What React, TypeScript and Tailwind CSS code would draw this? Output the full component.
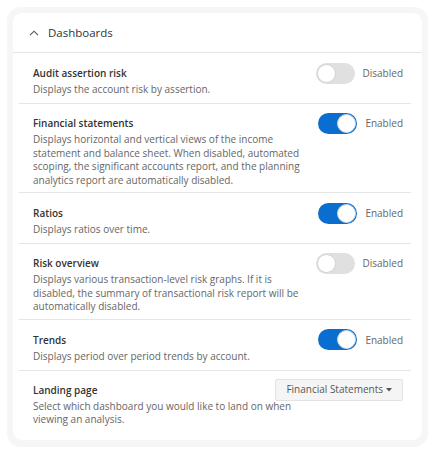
import { useState } from "react";

type Setting = {
  title: string;
  text: string;
  enabled: boolean;
};

const initialSettings: Setting[] = [
  {
    title: "Audit assertion risk",
    text: "Displays the account risk by assertion.",
    enabled: false,
  },
  {
    title: "Financial statements",
    text: "Displays horizontal and vertical views of the income statement and balance sheet. When disabled, automated scoping, the significant accounts report, and the planning analytics report are automatically disabled.",
    enabled: true,
  },
  {
    title: "Ratios",
    text: "Displays ratios over time.",
    enabled: true,
  },
  {
    title: "Risk overview",
    text: "Displays various transaction-level risk graphs. If it is disabled, the summary of transactional risk report will be automatically disabled.",
    enabled: false,
  },
  {
    title: "Trends",
    text: "Displays period over period trends by account.",
    enabled: true,
  },
];

const Toggle = ({ on, onClick }: { on: boolean; onClick: () => void }) => (
  <button
    type="button"
    onClick={onClick}
    className="flex items-center gap-[8px]"
  >
    <span
      className={`flex h-[21px] w-[39px] items-center rounded-full p-[1px] ${
        on ? "justify-end bg-[#0a6ed1]" : "justify-start bg-[#e0e0e0]"
      }`}
    >
      <span className="h-[19px] w-[19px] rounded-full border border-[#d4d4d4] bg-white" />
    </span>
    <span className="text-[10px] leading-[16px] text-[#666]">
      {on ? "Enabled" : "Disabled"}
    </span>
  </button>
);

const App = () => {
  const [settings, setSettings] = useState(initialSettings);

  const handleToggle = (index: number) => {
    setSettings((prev) =>
      prev.map((s, i) => (i === index ? { ...s, enabled: !s.enabled } : s))
    );
  };

  return (
    <div
      className="min-h-screen bg-white p-[7px]"
      style={{ fontFamily: '"Open Sans", "Liberation Sans", sans-serif' }}
    >
      <div className="rounded-[14px] bg-[#f6f6f6] px-[6px] pt-[6px] pb-[7px]">
        <div className="rounded-[9px] bg-white pb-[13px]">
          <div className="flex h-[40px] items-center gap-[9px] border-b border-[#e6e6e6] pl-[16px]">
            <svg width="10" height="6" viewBox="0 0 10 6" fill="none">
              <path d="M1 5.2L5 1.2L9 5.2" stroke="#555" strokeWidth="1.1" />
            </svg>
            <span className="text-[11.5px] leading-[18px] text-[#333]">
              Dashboards
            </span>
          </div>

          <div className="ml-[6px] mr-[11px]">
            {settings.map((s, i) => (
              <div
                key={s.title}
                className="flex min-h-[51px] flex-col justify-center border-b border-[#e6e6e6] pt-[11px] pb-[5px] pl-[14px] pr-[8px]"
              >
                <div className="flex items-center justify-between">
                  <div className="text-[10px] font-semibold leading-[16px] text-[#333]">
                    {s.title}
                  </div>
                  <div className="-my-[3px]">
                    <Toggle on={s.enabled} onClick={() => handleToggle(i)} />
                  </div>
                </div>
                <p className="mt-[2px] max-w-[278px] text-[10px] leading-[13.5px] text-[#666]">
                  {s.text}
                </p>
              </div>
            ))}

            <div className="pt-[11px] pl-[14px] pr-[8px]">
              <div className="flex items-center justify-between">
                <div className="text-[10px] font-semibold leading-[16px] text-[#333]">
                  Landing page
                </div>
                <button
                  type="button"
                  className="-my-[3px] flex h-[22px] items-center gap-[3px] rounded-[2px] border border-[#e2e2e2] bg-[#f5f5f5] px-[10px] text-[10px] text-[#555]"
                >
                  Financial Statements
                  <svg width="6" height="4" viewBox="0 0 6 4">
                    <path d="M0 0H6L3 3.5Z" fill="#555" />
                  </svg>
                </button>
              </div>
              <p className="mt-[2px] max-w-[278px] text-[10px] leading-[13.5px] text-[#666]">
                Select which dashboard you would like to land on when viewing
                an analysis.
              </p>
            </div>
          </div>
        </div>
      </div>
    </div>
  );
};

export default App;
